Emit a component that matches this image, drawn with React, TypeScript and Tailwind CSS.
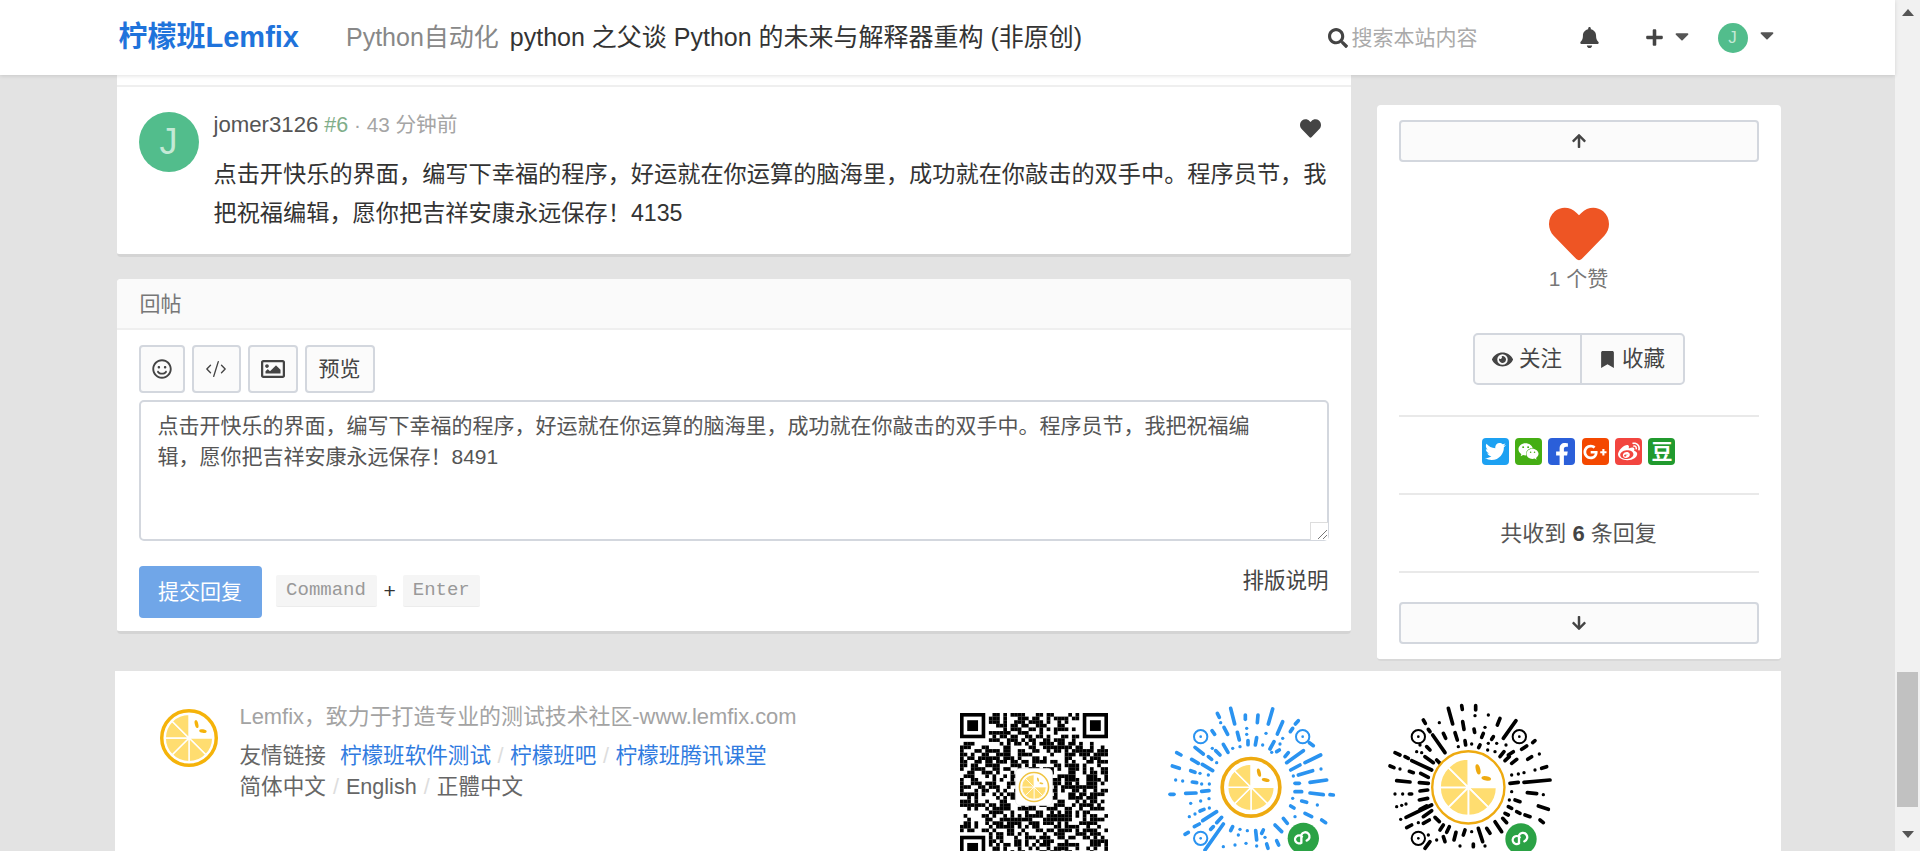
import { CodeXml } from 'lucide-react'
import {
  FaArrowDown,
  FaArrowUp,
  FaBell,
  FaBookmark,
  FaCaretDown,
  FaEye,
  FaFacebookF,
  FaGooglePlusG,
  FaHeart,
  FaPlus,
  FaRegImage,
  FaRegSmile,
  FaSearch,
  FaTwitter,
  FaWeibo,
  FaWeixin,
} from 'react-icons/fa'

const COMMENT = '点击开快乐的界面，编写下幸福的程序，好运就在你运算的脑海里，成功就在你敲击的双手中。程序员节，我把祝福编辑，愿你把吉祥安康永远保存！'

function sector(i: number, r: number) {
  const a0 = ((90 + 45 * i) * Math.PI) / 180
  const a1 = ((135 + 45 * i) * Math.PI) / 180
  return `M0 0L${r * Math.sin(a0)} ${-r * Math.cos(a0)}A${r} ${r} 0 0 1 ${r * Math.sin(a1)} ${-r * Math.cos(a1)}Z`
}

function Lemon({ ring = '#f2b10f', ringWidth = 6, wedge = 39 }: { ring?: string; ringWidth?: number; wedge?: number }) {
  return (
    <g>
      <circle r={50 - ringWidth / 2} fill="#fff" stroke={ring} strokeWidth={ringWidth} />
      {[0, 1, 2, 3, 4, 5].map((i) => (
        <path key={i} d={sector(i, wedge)} fill="#ffdd70" stroke="#fff" strokeWidth={2.4} />
      ))}
      <ellipse cx={13} cy={-24} rx={3} ry={7} fill={ring} transform="rotate(-14 13 -24)" />
      <ellipse cx={24} cy={-12} rx={6.5} ry={3} fill={ring} transform="rotate(10 24 -12)" />
    </g>
  )
}

// qr modules: not a real code, only the look of one
const QR_SIZE = 41
function qrCells() {
  const cells: [number, number][] = []
  let seed = 20190913
  const inFinder = (x: number, y: number) =>
    (x < 8 && y < 8) || (x >= QR_SIZE - 8 && y < 8) || (x < 8 && y >= QR_SIZE - 8)
  for (let y = 0; y < QR_SIZE; y++) {
    for (let x = 0; x < QR_SIZE; x++) {
      seed = (seed * 1103515245 + 12345) & 0x7fffffff
      if (!inFinder(x, y) && (seed >> 16) % 100 < 54) cells.push([x, y])
    }
  }
  return cells
}
const QR_CELLS = qrCells()

function Finder({ x, y }: { x: number; y: number }) {
  return (
    <g>
      <rect x={x + 0.5} y={y + 0.5} width={6} height={6} fill="none" stroke="#000" />
      <rect x={x + 2} y={y + 2} width={3} height={3} fill="#000" />
    </g>
  )
}

function QrCode() {
  return (
    <svg width={148} height={148} viewBox={`0 0 ${QR_SIZE} ${QR_SIZE}`} className="shrink-0 mt-[42px]">
      {QR_CELLS.map(([x, y]) => (
        <rect key={`${x}-${y}`} x={x} y={y} width={1.02} height={1.02} fill="#000" />
      ))}
      <Finder x={0} y={0} />
      <Finder x={QR_SIZE - 7} y={0} />
      <Finder x={0} y={QR_SIZE - 7} />
      <rect x={15.4} y={15.4} width={10.2} height={10.2} rx={1.2} fill="#fff" stroke="#e6e6e6" strokeWidth={0.2} />
      <g transform="translate(20.5 20.5) scale(0.085)">
        <Lemon ring="#efc443" ringWidth={5} wedge={40} />
      </g>
    </svg>
  )
}

const BLUE_RAYS = [
  [212, 25, 224, 72], [172, 40, 178, 52], [256, 45, 256, 58], [294, 45, 292, 68], [338, 27, 325, 72], [368, 65, 352, 102],
  [415, 62, 406, 72], [182, 68], [192, 82, 203, 103], [260, 85], [260, 103], [318, 100], [398, 85, 391, 95],
  [232, 97, 238, 120], [290, 113, 286, 135], [264, 122, 264, 134], [218, 145], [190, 133, 204, 157], [240, 140], [308, 135],
  [342, 125, 330, 147], [368, 115], [360, 132], [156, 92, 164, 103], [460, 137, 448, 128],
  [105, 142, 130, 162], [157, 145], [180, 165, 167, 152], [145, 170, 155, 178], [95, 178, 115, 190], [50, 158, 63, 165],
  [170, 188], [127, 193, 158, 212], [37, 198, 58, 205], [92, 212, 105, 217], [145, 225], [120, 220], [47, 240], [68, 243],
  [97, 246, 110, 248], [125, 252], [148, 252], [30, 283, 42, 283], [77, 280, 108, 279], [125, 274, 147, 272], [92, 310],
  [122, 303], [147, 296], [120, 333, 132, 328], [148, 324], [88, 350], [105, 342], [128, 362, 170, 335], [170, 368, 185, 352],
  [103, 380, 118, 372], [152, 388, 160, 380], [75, 403, 85, 397], [135, 450, 190, 372], [218, 380, 212, 392], [240, 388],
  [235, 405], [262, 392], [287, 392, 290, 420], [310, 390, 305, 400], [345, 375, 365, 395], [370, 355, 382, 370], [315, 412],
  [225, 435], [190, 440], [258, 430], [290, 438], [320, 432, 324, 445], [350, 422, 356, 435],
  [375, 170, 385, 158], [380, 188, 430, 152], [350, 155, 358, 150], [392, 210, 420, 195], [435, 188, 482, 165],
  [415, 225, 458, 212], [483, 207], [400, 228], [450, 247, 500, 240], [405, 250, 418, 250], [405, 275, 425, 275],
  [450, 279, 490, 284], [510, 284, 520, 285], [425, 303, 440, 307], [472, 315], [398, 295], [392, 318, 402, 324],
  [435, 340, 455, 350], [405, 350], [485, 360, 497, 368], [335, 157],
]

const BLACK_RAYS = [
  [205, 25, 218, 72], [245, 17, 247, 28], [287, 17, 287, 30], [285, 47], [325, 45], [130, 60, 136, 70], [178, 68],
  [248, 65, 252, 88], [282, 87, 284, 97], [360, 55, 352, 75], [315, 82], [408, 62, 370, 115], [145, 88, 150, 95],
  [190, 100, 197, 115], [225, 98, 232, 120], [310, 100, 305, 112], [340, 110, 335, 118], [158, 105, 195, 158], [120, 135],
  [110, 155], [125, 158], [140, 140, 150, 150], [255, 122, 257, 135], [235, 140], [275, 132], [300, 135, 296, 143], [325, 130],
  [350, 130], [345, 155], [323, 150], [378, 135], [372, 155, 360, 170], [465, 122, 458, 128], [440, 138, 425, 148],
  [400, 155, 385, 165], [375, 182, 388, 170], [410, 178, 395, 190], [455, 170, 443, 178], [478, 162],
  [45, 158, 60, 165], [75, 170, 85, 175], [95, 182, 155, 210], [135, 170, 160, 188], [30, 198, 42, 203], [60, 207],
  [88, 214, 100, 218], [122, 220, 145, 232], [170, 180, 180, 190], [50, 242, 90, 246], [118, 248, 145, 250], [45, 282], [68, 282],
  [88, 282, 95, 282], [120, 273, 143, 270], [118, 300, 143, 295], [50, 320], [65, 316], [78, 312], [78, 352, 155, 315],
  [120, 328, 140, 318], [62, 358], [130, 350, 155, 332], [165, 352, 178, 365], [130, 370, 148, 360], [80, 383, 95, 375], [115, 368],
  [190, 375, 180, 390], [208, 380, 200, 397], [145, 405], [135, 445, 150, 425], [170, 420], [222, 420, 228, 397],
  [250, 405, 255, 390], [275, 395], [295, 385, 308, 425], [320, 385, 330, 400], [345, 365, 365, 395], [368, 355, 380, 368],
  [190, 410, 195, 425], [240, 438], [280, 432, 280, 440], [315, 438],
  [390, 250, 415, 247], [432, 247, 510, 240], [395, 225], [415, 222], [432, 218], [465, 210], [485, 205, 500, 200], [395, 275],
  [442, 278, 470, 281], [490, 284], [388, 300], [405, 300, 420, 305], [385, 320, 395, 325], [410, 335, 420, 340],
  [435, 345, 450, 350], [475, 318, 505, 328], [480, 360, 490, 368], [375, 340, 385, 345],
]

function Target({ x, y, color }: { x: number; y: number; color: string }) {
  return (
    <g>
      <circle cx={x} cy={y} r={20} fill="none" stroke={color} strokeWidth={6} />
      <circle cx={x} cy={y} r={4} fill={color} />
    </g>
  )
}

function MiniCode({
  rays,
  color,
  targets,
  center,
  scale,
  ringWidth,
  wedge,
  badge,
  className,
}: {
  rays: number[][]
  color: string
  targets: [number, number][]
  center: [number, number]
  scale: number
  ringWidth: number
  wedge: number
  badge: [number, number]
  className: string
}) {
  return (
    <svg width={180} height={151} viewBox="0 0 540 453" className={className}>
      {rays.map((r, i) => (
        <line
          key={i}
          x1={r[0]}
          y1={r[1]}
          x2={r.length > 2 ? r[2] : r[0]}
          y2={r.length > 2 ? r[3] : r[1]}
          stroke={color}
          strokeWidth={r.length > 2 ? 11 : 10}
          strokeLinecap="round"
        />
      ))}
      {targets.map(([x, y]) => (
        <Target key={`${x}-${y}`} x={x} y={y} color={color} />
      ))}
      <g transform={`translate(${center[0]} ${center[1]}) scale(${scale})`}>
        <Lemon ring="#eeaa10" ringWidth={ringWidth} wedge={wedge} />
      </g>
      <g transform={`translate(${badge[0]} ${badge[1]})`}>
        <circle r={47} fill="#2ba245" />
        <path
          d="M-6 -4 A12 12 0 1 0 -8 14 V-10 A13 13 0 1 1 8 8"
          transform="translate(2 -1)"
          fill="none"
          stroke="#fff"
          strokeWidth={7}
          strokeLinecap="round"
        />
      </g>
    </svg>
  )
}

function FooterLemon() {
  return (
    <svg width={58} height={58} viewBox="-50 -50 100 100" className="shrink-0 mt-[38px]">
      <Lemon ring="#f5b30a" ringWidth={6} wedge={41} />
    </svg>
  )
}

function SocialIcon({ className, children }: { className: string; children: React.ReactNode }) {
  return (
    <span className={`flex h-[27px] w-[27px] items-center justify-center overflow-hidden rounded-[4px] text-white ${className}`}>
      {children}
    </span>
  )
}

function ToolButton({ className, children }: { className: string; children: React.ReactNode }) {
  return (
    <button className={`flex h-[48px] items-center justify-center rounded-[4px] border-2 border-[#d3d7de] bg-[#fbfbfb] text-[#444] ${className}`}>
      {children}
    </button>
  )
}

function CommentCard() {
  return (
    <div className="rounded-b-[4px] border-b-[3px] border-[#d4d4d4] bg-white">
      <div className="h-[10px] border-b-2 border-[#efefef] box-content" />
      <div className="flex pl-[22px] pr-[23px] pt-[23px] h-[167px]">
        <div className="mt-[2px] flex h-[60px] w-[60px] shrink-0 items-center justify-center rounded-full bg-[#52bd8c] text-[36px] text-[#c4e9d6]">
          J
        </div>
        <div className="ml-[15px] min-w-0 flex-1">
          <div className="flex h-[30px] items-center justify-between text-[20.7px]">
            <div>
              <span className="text-[22.2px] text-[#555]">jomer3126</span>
              <span className="ml-[6px] text-[21.5px] text-[#7fae8a]">#6</span>
              <span className="text-[#a5a5a5]"> · 43 分钟前</span>
            </div>
            <FaHeart className="mr-[7px] mt-[7px] text-[21px] text-[#444]" />
          </div>
          <p className="mt-[15px] text-[23.2px] leading-[39px] text-[#333]">{COMMENT}4135</p>
        </div>
      </div>
    </div>
  )
}

function ReplyCard() {
  return (
    <div className="mt-[22px] rounded-[4px] border-b-[3px] border-[#d4d4d4] bg-white">
      <div className="flex h-[51px] items-center rounded-t-[4px] border-b-2 border-[#efefef] bg-[#fafafa] pl-[23px] text-[21px] text-[#777]">
        回帖
      </div>
      <div className="px-[22px] pt-[15px] pb-[13px]">
        <div className="flex gap-[7px]">
          <ToolButton className="w-[46px]"><FaRegSmile className="text-[20px]" /></ToolButton>
          <ToolButton className="w-[49px]"><CodeXml size={22} strokeWidth={1.5} /></ToolButton>
          <ToolButton className="w-[50px]"><FaRegImage className="text-[24px]" /></ToolButton>
          <ToolButton className="w-[70px] text-[21px]">预览</ToolButton>
        </div>
        <div className="relative mt-[7px]">
          <textarea
            readOnly
            defaultValue={`${COMMENT}8491`}
            className="block h-[141px] w-full resize-none overflow-hidden rounded-[5px] border-2 border-[#d3d7de] pl-[17px] pr-[40px] pt-[8px] text-[21px] leading-[31px] text-[#555] outline-none"
          />
          <span className="absolute bottom-[1px] right-[1px] flex h-[18px] w-[18px] items-end justify-end border-l border-t border-[#ddd] bg-white">
            <svg width={14} height={14} viewBox="0 0 14 14">
              <path d="M13 4L4 13M13 9L9 13" stroke="#777" strokeWidth={1} />
            </svg>
          </span>
        </div>
        <div className="mt-[25px] flex items-start">
          <button className="h-[52px] w-[123px] rounded-[4px] bg-[#70a6e8] text-[21px] text-white">提交回复</button>
          <kbd className="ml-[14px] mt-[9px] flex h-[32px] w-[101px] items-center justify-center rounded-[2px] border-b border-[#ececec] bg-[#f5f5f5] font-['Liberation_Mono',monospace] text-[19px] font-normal text-[#999]">
            Command
          </kbd>
          <span className="ml-[7px] mr-[7px] mt-[9px] text-[21px] leading-[32px] text-[#333]">+</span>
          <kbd className="mt-[9px] flex h-[32px] w-[77px] items-center justify-center rounded-[2px] border-b border-[#ececec] bg-[#f5f5f5] font-['Liberation_Mono',monospace] text-[19px] font-normal text-[#999]">
            Enter
          </kbd>
          <a className="ml-auto text-[21.5px] leading-[30px] text-[#444]">排版说明</a>
        </div>
      </div>
    </div>
  )
}

function Sidebar() {
  return (
    <aside className="mt-[30px] flex h-[556px] w-[404px] shrink-0 flex-col rounded-[4px] border-b-2 border-[#d8d8d8] bg-white px-[22px] pt-[15px]">
      <button className="flex h-[42px] w-full shrink-0 items-center justify-center rounded-[4px] border-2 border-[#d3d7de] bg-[#fbfbfb] text-[#444]">
        <FaArrowUp className="text-[16px]" />
      </button>
      <div className="mt-[42px] flex flex-col items-center">
        <FaHeart className="text-[60px] text-[#ee5524]" />
        <div className="text-[21px] leading-[30px] text-[#777]">1 个赞</div>
      </div>
      <div className="mx-auto mt-[39px] flex h-[52px] w-[212px] shrink-0 rounded-[5px] border-2 border-[#d3d7de] bg-[#fbfbfb] text-[21.5px] text-[#444]">
        <button className="flex flex-1 items-center justify-center gap-[6px] border-r-2 border-[#d3d7de]">
          <FaEye className="text-[21px]" />关注
        </button>
        <button className="flex w-[101px] items-center justify-center gap-[6px]">
          <FaBookmark className="text-[17px]" />收藏
        </button>
      </div>
      <div className="mt-[30px] border-t-2 border-[#e9e9e9] pt-[21px]">
        <div className="flex justify-center gap-[6.4px]">
          <SocialIcon className="bg-[#1da1f2] text-[21px]"><FaTwitter /></SocialIcon>
          <SocialIcon className="bg-[#45ae14] text-[21px]"><FaWeixin /></SocialIcon>
          <SocialIcon className="bg-[#2b5fd9] text-[22px]"><FaFacebookF className="mt-[4px]" /></SocialIcon>
          <SocialIcon className="bg-[#f44800] text-[24px]"><FaGooglePlusG /></SocialIcon>
          <SocialIcon className="bg-[#f2453f] text-[22px]"><FaWeibo /></SocialIcon>
          <SocialIcon className="bg-[#219a2e] text-[21px] font-bold">豆</SocialIcon>
        </div>
      </div>
      <div className="mt-[28px] flex h-[78px] items-center justify-center border-t-2 border-[#e9e9e9] text-[22px] text-[#555]">
        共收到&nbsp;<b className="text-[#444]">6</b>&nbsp;条回复
      </div>
      <div className="border-t-2 border-[#e9e9e9] pt-[29px]">
        <button className="flex h-[42px] w-full items-center justify-center rounded-[4px] border-2 border-[#d3d7de] bg-[#fbfbfb] text-[#444]">
          <FaArrowDown className="text-[16px]" />
        </button>
      </div>
    </aside>
  )
}

function Footer() {
  return (
    <footer className="mt-[10px] flex h-[200px] bg-white pl-[45px]">
      <FooterLemon />
      <div className="ml-[22px] w-[720px] shrink-0 pt-[31px] text-[21.6px]">
        <div className="text-[21.9px] leading-[30px] text-[#a3a3a3]">Lemfix，致力于打造专业的测试技术社区-www.lemfix.com</div>
        <div className="mt-[8px] leading-[31px] text-[#666]">
          友情链接
          <a className="ml-[14px] text-[#307bdf]">柠檬班软件测试</a>
          <span className="mx-[6.5px] text-[#ddd]">/</span>
          <a className="text-[#307bdf]">柠檬班吧</a>
          <span className="mx-[6.5px] text-[#ddd]">/</span>
          <a className="text-[#307bdf]">柠檬班腾讯课堂</a>
        </div>
        <div className="leading-[31px] text-[#666]">
          简体中文
          <span className="mx-[7px] text-[#ddd]">/</span>
          English
          <span className="mx-[7px] text-[#ddd]">/</span>
          正體中文
        </div>
      </div>
      <QrCode />
      <MiniCode
        className="ml-[52px] mt-[29px] shrink-0"
        rays={BLUE_RAYS}
        color="#2a93f0"
        targets={[[122, 110], [428, 110], [122, 415]]}
        center={[273, 262]}
        scale={1.84}
        ringWidth={6}
        wedge={38}
        badge={[430, 415]}
      />
      <MiniCode
        className="ml-[40px] mt-[29px] shrink-0"
        rays={BLACK_RAYS}
        color="#000"
        targets={[[115, 110], [418, 110], [115, 415]]}
        center={[265, 262]}
        scale={2.24}
        ringWidth={3.2}
        wedge={38}
        badge={[423, 417]}
      />
    </footer>
  )
}

function Navbar() {
  return (
    <header className="relative z-10 h-[75px] shrink-0 bg-white shadow-[0_1px_4px_rgba(0,0,0,0.12)]">
      <div className="mx-auto flex h-full w-[1666px] items-center pl-[4px] pr-[3px]">
        <a className="text-[29px] font-bold text-[#1f73db]">柠檬班Lemfix</a>
        <div className="ml-[47px] text-[25px]">
          <span className="text-[#888]">Python自动化</span>
          <span className="ml-[11px] text-[#333]">python 之父谈 Python 的未来与解释器重构 (非原创)</span>
        </div>
        <div className="ml-auto flex items-center text-[#444]">
          <FaSearch className="text-[20px]" />
          <input
            readOnly
            placeholder="搜索本站内容"
            className="ml-[4px] w-[207px] text-[21px] outline-none placeholder:text-[#aaa]"
          />
          <FaBell className="ml-[20px] text-[21px]" />
          <FaPlus className="ml-[45px] text-[19px]" />
          <FaCaretDown className="ml-[7px] mb-[4px] text-[22px] text-[#555]" />
          <div className="ml-[25px] flex h-[30px] w-[30px] items-center justify-center rounded-full bg-[#52bd8c] text-[17px] text-[#c4e9d6]">
            J
          </div>
          <FaCaretDown className="ml-[8px] mb-[6px] text-[22px] text-[#555]" />
        </div>
      </div>
    </header>
  )
}

function FakeScrollbar() {
  return (
    <div className="flex w-[25px] shrink-0 flex-col items-center bg-[#f1f1f1] pt-[9px]">
      <span className="h-0 w-0 border-x-[6px] border-b-[7px] border-x-transparent border-b-[#555]" />
      <div className="mt-[656px] h-[135px] w-[21px] bg-[#c1c1c1]" />
      <span className="mt-[24px] h-0 w-0 border-x-[6px] border-t-[7px] border-x-transparent border-t-[#555]" />
    </div>
  )
}

export default function App() {
  return (
    <div className="flex h-screen overflow-hidden bg-[#e3e3e3] font-['Liberation_Sans','Noto_Sans_CJK_SC',sans-serif]">
      <div className="flex min-w-0 flex-1 flex-col">
        <Navbar />
        <main className="flex-1 overflow-hidden">
          <div className="mx-auto w-[1666px]">
            <div className="flex gap-[26px] pl-[2px]">
              <div className="w-[1234px] shrink-0">
                <CommentCard />
                <ReplyCard />
              </div>
              <Sidebar />
            </div>
            <Footer />
          </div>
        </main>
      </div>
      <FakeScrollbar />
    </div>
  )
}
